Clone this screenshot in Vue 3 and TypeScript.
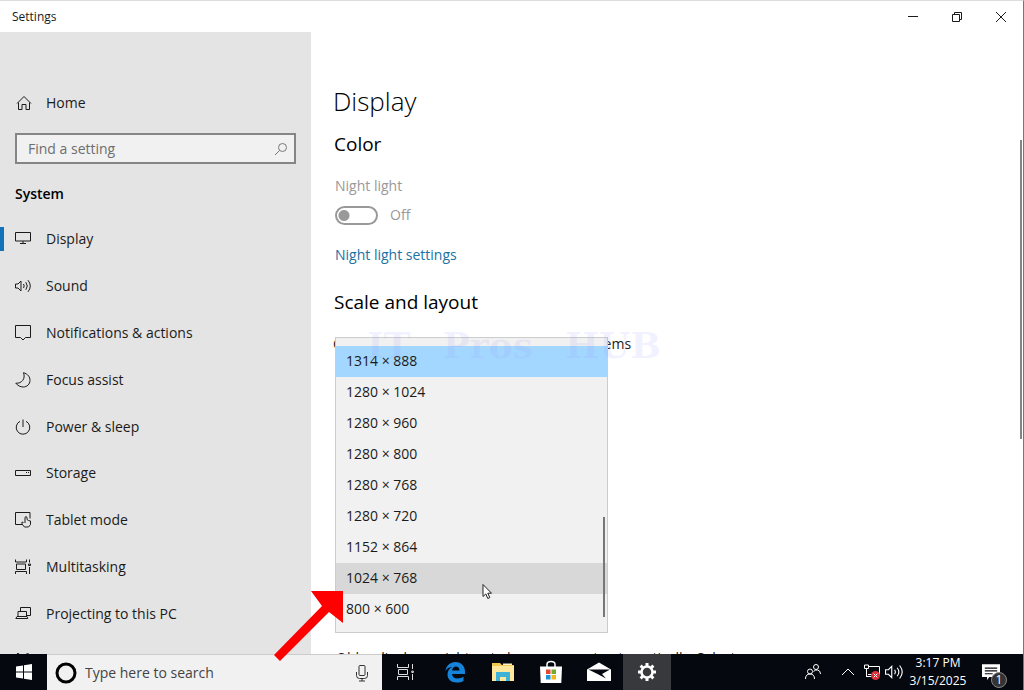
<script setup lang="ts">
import { ref } from 'vue'

interface NavItem {
  label: string
  icon: string
}

const navItems: NavItem[] = [
  { label: 'Display', icon: 'M.5 1.500h15v8.500H.5zM8 10v2.500M5 12.500h6' },
  { label: 'Sound', icon: 'M.5 6h2.500l3-3v10l-3-3H.5zM8.500 6q1.400 2 0 4M10.800 4.200q3 3.800 0 7.600M13 2.200q4.600 5.800 0 11.600' },
  { label: 'Notifications & actions', icon: 'M.5 .5h15v12H10.500L8 15l-2.500-2.500H.5z' },
  { label: 'Focus assist', icon: 'M8.500.7C13 2 15 5 15 8.400c0 3.700-3 6.600-6.700 6.600-3 0-5.600-1.400-7.500-3.800 5.800.6 10-4.500 7.700-10.500z' },
  { label: 'Power & sleep', icon: 'M8 .5v7.500M5 2.300a6.800 6.800 0 1 0 6 0' },
  { label: 'Storage', icon: 'M.5 5.500h15v5H.5zM11 7.500h1M13 7.500h1' },
  { label: 'Tablet mode', icon: 'M7 12.500H.5v-12h14.500v6M8.500 10.500l-1.500-.5v2l2.500 3h4l2-2.500V9l-2-.5-1.500-1V5.300q-1-1.300-2 0V11' },
  { label: 'Multitasking', icon: 'M.5 .5v2.500h11V.5M.5 15v-2.500h11V15M1.500 5h9v5.500h-9zM14.500 .5v3M14.500 8v7M13.500 5h2v1.500h-2z' },
  { label: 'Projecting to this PC', icon: 'M5.500 5V1.500h10v8h-3.500M3 5.500h8.500v5H3zM2 10.500h10l.8 2H.8z' },
  { label: 'Shared experiences', icon: 'M3 0.500a2 2 0 1 0 .1 0M12.500 0.500a2 2 0 1 0 .1 0M4 5l8 5' },
]

const resolutions: string[] = [
  '1314 × 888',
  '1280 × 1024',
  '1280 × 960',
  '1280 × 800',
  '1280 × 768',
  '1280 × 720',
  '1152 × 864',
  '1024 × 768',
  '800 × 600',
]

const resolution = ref('1314 × 888')
const hovered = ref('1024 × 768')
const query = ref('')
const taskQuery = ref('')
const nightLight = ref(false)
</script>

<template>
  <div class="desktop">
    <header class="titlebar">
      <span class="window-title">Settings</span>
      <div class="window-controls">
        <button type="button" aria-label="Minimize">
          <svg viewBox="0 0 12 12"><path d="M1 5.500h10" /></svg>
        </button>
        <button type="button" aria-label="Restore">
          <svg viewBox="0 0 12 12"><path d="M1.500 3.500h7v7h-7zM3.500 3V1.500h7v7H9" /></svg>
        </button>
        <button type="button" aria-label="Close">
          <svg viewBox="0 0 12 12"><path d="M1 1l10 10M11 1L1 11" /></svg>
        </button>
      </div>
    </header>

    <div class="window-body">
      <aside class="sidebar">
        <a class="home" href="#home">
          <svg class="icon" viewBox="0 0 16 16"><path d="M1 8.500L8 1.500l7 7M2.500 7.500V14.500h3.500V9.500h4v5h3.500V7.500" /></svg>
          Home
        </a>
        <label class="search">
          <input v-model="query" type="text" placeholder="Find a setting" aria-label="Find a setting" />
          <svg viewBox="0 0 14 14"><circle cx="8.500" cy="5.500" r="4" /><path d="M5.600 8.400L1 13" /></svg>
        </label>
        <h2 class="section">System</h2>
        <nav class="nav">
          <a
            v-for="(item, i) in navItems"
            :key="item.label"
            href="#system"
            class="nav-item"
            :class="{ active: i === 0 }"
          >
            <svg class="icon" viewBox="0 0 16 16"><path :d="item.icon" /></svg>
            {{ item.label }}
          </a>
        </nav>
      </aside>

      <main class="content">
        <h1>Display</h1>
        <h2>Color</h2>
        <label class="field-label" for="night">Night light</label>
        <div class="toggle-row">
          <input id="night" v-model="nightLight" class="toggle" type="checkbox" role="switch" disabled />
          <span>Off</span>
        </div>
        <a class="link" href="#night-light">Night light settings</a>
        <h2 class="scale-heading">Scale and layout</h2>
        <div class="scale-area">
          <label class="scale-label" for="resolution">Change the size of text, apps, and other items</label>
          <div class="popup">
            <select id="resolution" v-model="resolution" size="9">
              <option v-for="r in resolutions" :key="r" :value="r" :class="{ hovered: r === hovered }">{{ r }}</option>
            </select>
            <span class="popup-scroll"></span>
          </div>
          <div class="watermark"><span>IT</span><span>Pros</span><span>HUB</span></div>
        </div>
        <p class="note">Older displays might not always connect automatically. Select</p>
        <span class="page-scroll"></span>
      </main>
    </div>

    <footer class="taskbar">
      <button class="start" type="button" aria-label="Start">
        <svg viewBox="0 0 18 18"><path d="M1 3.500l7-1v6H1zM9 2.300L17 1v7.500H9zM1 9.500h7v6l-7-1zM9 9.500h8V17l-8-1.300z" /></svg>
      </button>
      <label class="task-search">
        <svg class="cortana" viewBox="0 0 22 22"><circle cx="11" cy="11" r="9" /></svg>
        <input v-model="taskQuery" type="text" placeholder="Type here to search" aria-label="Type here to search" />
        <svg class="mic" viewBox="0 0 14 18"><rect x="4" y="1.500" width="6" height="10" rx="1" /><path d="M1.500 8v3.500q0 3 3 3h5q3 0 3-3V8M7 14.500V17M4 17h6" /></svg>
      </label>
      <div class="apps">
        <button type="button" aria-label="Task view">
          <svg class="line" viewBox="0 0 24 24"><path d="M3.500 4v3.500h11V4M3.500 20v-3.500h11V20M4.500 9.500h9v5h-9zM18.500 4v5M18.500 14v6M17.800 11h1.500v1.500h-1.500z" /></svg>
        </button>
        <button type="button" aria-label="Microsoft Edge">
          <svg viewBox="0 0 24 24"><path fill="#1583da" d="M2.500 11C3.300 5.500 7 2 12.500 2 18.500 2 22 6.500 22 11.500V14H9c.2 3 2.500 4.500 5.500 4.500 2.300 0 4.300-.6 6-1.700v4.200c-2 1-4.200 1.500-6.800 1.500C8 22.500 4.500 19 4.500 14.500c0-3.300 1.700-6 4.700-7.500C6.300 7 4 8.600 2.500 11zM9 10.500h7.500C16.500 8 15 6.500 12.800 6.500 10.700 6.500 9.300 8.200 9 10.500z" /></svg>
        </button>
        <button type="button" aria-label="File Explorer">
          <svg viewBox="0 0 24 24"><path fill="#f2c94f" d="M1 3h8l2 2h12v16H1z" /><path fill="#ffe79c" d="M1 6h22v15H1z" /><path fill="#fff3c8" d="M12 3.500h9V5h-9z" /><path fill="#3fb2d8" d="M5 21v-9h14v9h-4v-4H9v4z" /></svg>
        </button>
        <button type="button" aria-label="Microsoft Store">
          <svg viewBox="0 0 24 24"><path fill="none" stroke="#fff" stroke-width="1.500" d="M8 7V4.500q0-3 4-3t4 3V7" /><path fill="#fff" d="M1 6.500h22l-.7 16.500H1.700z" /><path fill="#e0492f" d="M7 9.500h4.500V14H7z" /><path fill="#73a92f" d="M12.500 9.500H17V14h-4.500z" /><path fill="#1f93d6" d="M7 15h4.500v4.500H7z" /><path fill="#f4b61c" d="M12.500 15H17v4.500h-4.500z" /></svg>
        </button>
        <button type="button" aria-label="Mail">
          <svg viewBox="0 0 24 24"><path fill="#fff" d="M0 9.500L12 2.500l12 7V21H0z" /><path fill="#05080f" d="M1.500 9.500h21.500L15 14l4 4.500L10.500 14z" /></svg>
        </button>
        <button class="current" type="button" aria-label="Settings">
          <svg viewBox="0 0 24 24"><circle cx="12" cy="12" r="5.500" fill="none" stroke="#fff" stroke-width="2.500" /><path fill="none" stroke="#fff" stroke-width="3" d="M12 6V3M12 18v3M6 12H3M18 12h3M7.800 7.800L5.600 5.600M16.200 16.200l2.200 2.200M7.800 16.200l-2.200 2.200M16.200 7.800l2.200-2.200" /></svg>
        </button>
      </div>
      <div class="tray">
        <button type="button" class="people" aria-label="People">
          <svg viewBox="0 0 18 18"><circle cx="6" cy="8.500" r="2.500" /><circle cx="12" cy="4" r="2.500" /><path d="M1.500 16q0-5 4.500-5t4.500 5M9.500 8.500q2-2 4-1.500 3 .5 3 4" /></svg>
        </button>
        <button type="button" class="chevron" aria-label="Show hidden icons">
          <svg viewBox="0 0 14 14"><path d="M1 10l6-6 6 6" /></svg>
        </button>
        <button type="button" class="network" aria-label="Network">
          <svg viewBox="0 0 18 18"><path d="M5 3.500h11.500v8H5M1.500 2h4v3.500h-4zM3.500 5.500v8.500M3.500 13.500h5" /><circle class="badge" cx="12.500" cy="12.500" r="4.500" /><path d="M10.700 10.700l3.600 3.600M14.300 10.700l-3.600 3.600" /></svg>
        </button>
        <button type="button" class="volume" aria-label="Volume">
          <svg viewBox="0 0 16 16"><path :d="navItems[1].icon" /></svg>
        </button>
        <time class="clock"><span>3:17 PM</span><span>3/15/2025</span></time>
        <button type="button" class="action-center" aria-label="Notifications">
          <svg viewBox="0 0 16 16"><path class="bubble" d="M0 1h16v11.500H6.500L4.500 15v-2.500H0z" /><path class="bubble-lines" d="M2.500 4.500h11M2.500 7h11M2.500 9.500h7" /></svg>
          <span class="count">1</span>
        </button>
      </div>
    </footer>

    <svg class="arrow" viewBox="0 0 70 70" aria-hidden="true"><path fill="#fe0000" d="M0 64L48 15 37 0h32v32L55 21 6 70z" /></svg>
    <svg class="cursor" viewBox="0 0 12 18" aria-hidden="true"><path fill="#fff" stroke="#222" d="M1 1.500v12l2.800-2.600 2 4.600 2-.9-2-4.400h3.700z" /></svg>
  </div>
</template>

<style>
body {
  margin: 0;
}
</style>

<style scoped>
.desktop {
  position: relative;
  display: flex;
  flex-direction: column;
  height: 100vh;
  overflow: hidden;
  box-sizing: border-box;
  border-top: 1px solid #dcdcdc;
  border-right: 1px solid #777;
  background: #fff;
  color: #1b1b1b;
  font: 14px/20px 'Open Sans', 'Noto Sans', sans-serif;
}
h1,
h2,
p {
  margin: 0;
}
button {
  display: flex;
  align-items: center;
  justify-content: center;
  padding: 0;
  border: 0;
  background: none;
  color: inherit;
  font: inherit;
}
a {
  color: inherit;
  text-decoration: none;
}
svg {
  fill: none;
  stroke: currentColor;
}
.titlebar {
  display: flex;
  flex: none;
  justify-content: space-between;
  height: 31px;
}
.window-title {
  padding-left: 12px;
  font-size: 12px;
  line-height: 32px;
}
.window-controls {
  display: flex;
}
.window-controls button {
  width: 44px;
}
.window-controls svg {
  width: 12px;
  height: 12px;
}
.window-body {
  display: flex;
  flex: 1;
  min-height: 0;
  overflow: hidden;
}
.sidebar {
  flex: none;
  width: 311px;
  background: #e4e4e4;
}
.icon {
  flex: none;
  width: 16px;
  height: 16px;
}
.home {
  display: flex;
  align-items: center;
  gap: 14px;
  margin-top: 61px;
  padding-left: 16px;
}
.search {
  display: flex;
  align-items: center;
  height: 31px;
  margin: 20px 15px 0;
  padding: 0 6px 0 11px;
  box-sizing: border-box;
  border: 2px solid #858585;
  background: #f1f1f1;
}
.search svg {
  width: 14px;
  height: 14px;
  color: #777;
}
input[type='text'] {
  flex: 1;
  min-width: 0;
  padding: 0;
  border: 0;
  outline: 0;
  background: none;
  color: inherit;
  font: inherit;
}
.search input::placeholder {
  color: #6e6e6e;
  opacity: 1;
}
.section {
  padding: 20px 15px 0;
  font-size: 14px;
  line-height: 20px;
  font-weight: 600;
  color: #000;
}
.nav {
  display: grid;
  grid-auto-rows: minmax(0, 1fr);
  height: 468px;
  margin-top: 12px;
}
.nav-item {
  position: relative;
  display: flex;
  align-items: center;
  gap: 15px;
  padding-left: 15px;
}
.nav-item.active::before {
  content: '';
  position: absolute;
  left: 0;
  width: 4px;
  height: 24px;
  background: #1172ba;
}
.content {
  position: relative;
  flex: 1;
  min-width: 0;
  padding: 49px 16px 0 22px;
  overflow: hidden;
}
h1 {
  font-size: 26px;
  line-height: 40px;
  font-weight: 300;
  color: #000;
}
.content h2 {
  padding-left: 1px;
  font-size: 19px;
  line-height: 28px;
  font-weight: 400;
  color: #000;
}
.content > h2 {
  margin-top: 9px;
}
.field-label {
  display: block;
  margin-top: 18px;
  padding-left: 2px;
  color: #999;
}
.toggle-row {
  display: flex;
  align-items: center;
  gap: 12px;
  margin-top: 9px;
  padding-left: 2px;
  color: #999;
}
.toggle {
  appearance: none;
  width: 43px;
  height: 19px;
  margin: 0;
  border: 2px solid #999;
  border-radius: 10px;
  background: radial-gradient(circle at 7px 50%, #999 5px, transparent 6px);
}
.link {
  display: block;
  margin-top: 20px;
  padding-left: 2px;
  color: #1a72a5;
}
.content .scale-heading {
  margin-top: 23px;
}
.scale-area {
  position: relative;
  height: 332px;
  padding-top: 18px;
  box-sizing: border-box;
}
.scale-label {
  display: block;
}
.popup {
  position: absolute;
  top: 21px;
  left: 2px;
  width: 273px;
  padding: 8px 0 7px;
  box-sizing: border-box;
  border: 1px solid #ccc;
  background: #f1f1f1;
}
select {
  display: block;
  width: 100%;
  padding: 0;
  border: 0;
  border-radius: 0;
  outline: 0;
  overflow: hidden;
  background: transparent;
  color: inherit;
  font: inherit;
}
option {
  height: 31px;
  min-height: 31px;
  padding: 5px 10px 0;
  box-sizing: border-box;
  color: #1b1b1b;
}
option:checked {
  background: #a4d7ff linear-gradient(#a4d7ff, #a4d7ff);
  color: #1b1b1b;
}
option.hovered {
  background: #d8d8d8;
}
.popup-scroll {
  position: absolute;
  right: 2px;
  bottom: 15px;
  width: 2px;
  height: 100px;
  background: #777;
}
.watermark {
  position: absolute;
  top: 11px;
  left: 34px;
  display: flex;
  gap: 32px;
  color: rgba(150, 150, 255, 0.13);
  font: bold 36px/36px 'DejaVu Serif', serif;
  pointer-events: none;
}
.note {
  padding-left: 3px;
  white-space: nowrap;
}
.page-scroll {
  position: absolute;
  top: 108px;
  right: 1px;
  width: 2px;
  height: 299px;
  background: #858585;
}
.taskbar {
  display: flex;
  flex: none;
  height: 36px;
  background: #05080f;
  color: #fff;
}
.start {
  width: 47px;
}
.start svg {
  width: 18px;
  height: 18px;
  fill: #fff;
  stroke: none;
}
.task-search {
  display: flex;
  flex: none;
  align-items: center;
  gap: 8px;
  width: 335px;
  padding: 0 13px 0 8px;
  box-sizing: border-box;
  border-top: 1px solid #ccc;
  background: #f1f1f1;
  color: #333;
}
.task-search input::placeholder {
  color: #444;
  opacity: 1;
}
.cortana {
  width: 22px;
  height: 22px;
  color: #000;
  stroke-width: 3;
}
.mic {
  width: 14px;
  height: 18px;
}
.apps {
  display: flex;
}
.apps button {
  width: 48px;
}
.apps button + button {
  margin-left: 1px;
}
.apps button:nth-child(n + 3) {
  margin-left: 0;
}
.apps svg {
  width: 24px;
  height: 24px;
  stroke: none;
}
.apps svg.line {
  stroke: #ddd;
}
.apps .current {
  background: #38393d;
}
.tray {
  display: flex;
  align-items: center;
  margin-left: auto;
  padding-right: 12px;
}
.tray svg {
  width: 18px;
  height: 18px;
}
.people {
  width: 44px;
}
.chevron {
  width: 26px;
}
.tray .chevron svg {
  width: 14px;
  height: 14px;
}
.network {
  width: 22px;
}
.badge {
  fill: #d8313a;
  stroke: none;
}
.volume {
  width: 22px;
}
.clock {
  display: flex;
  flex-direction: column;
  align-items: center;
  width: 66px;
  font-size: 12px;
  line-height: 18px;
}
.action-center {
  position: relative;
  width: 40px;
  height: 36px;
}
.bubble {
  fill: #fff;
  stroke: none;
}
.bubble-lines {
  stroke: #05080f;
}
.count {
  position: absolute;
  right: 4px;
  bottom: 2px;
  width: 14px;
  border: 1px solid #888;
  border-radius: 50%;
  background: #333;
  font-size: 12px;
  line-height: 14px;
}
.arrow {
  position: absolute;
  top: 590px;
  left: 274px;
  width: 70px;
  height: 70px;
  stroke: none;
}
.cursor {
  position: absolute;
  top: 582px;
  left: 482px;
  width: 12px;
  height: 18px;
}
</style>
